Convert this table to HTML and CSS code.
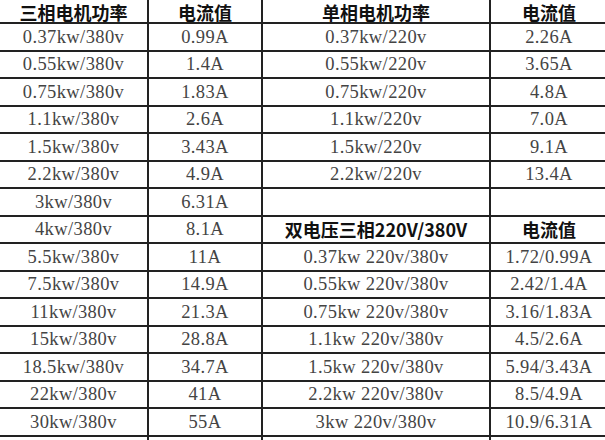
FILE: index.html
```html
<!DOCTYPE html>
<html lang="zh">
<head>
<meta charset="utf-8">
<link rel="stylesheet" href="styles.css">
</head>
<body>
<table class="sheet">
  <colgroup>
    <col class="c1"><col class="c2"><col class="c3"><col class="c4">
  </colgroup>
  <tr class="head"><td>三相电机功率</td><td>电流值</td><td>单相电机功率</td><td>电流值</td></tr>
  <tr><td>0.37kw/380v</td><td>0.99A</td><td>0.37kw/220v</td><td>2.26A</td></tr>
  <tr><td>0.55kw/380v</td><td>1.4A</td><td>0.55kw/220v</td><td>3.65A</td></tr>
  <tr><td>0.75kw/380v</td><td>1.83A</td><td>0.75kw/220v</td><td>4.8A</td></tr>
  <tr><td>1.1kw/380v</td><td>2.6A</td><td>1.1kw/220v</td><td>7.0A</td></tr>
  <tr><td>1.5kw/380v</td><td>3.43A</td><td>1.5kw/220v</td><td>9.1A</td></tr>
  <tr><td>2.2kw/380v</td><td>4.9A</td><td>2.2kw/220v</td><td>13.4A</td></tr>
  <tr><td>3kw/380v</td><td>6.31A</td><td></td><td></td></tr>
  <tr><td>4kw/380v</td><td>8.1A</td><td class="hd">双电压三相220V/380V</td><td class="hd">电流值</td></tr>
  <tr><td>5.5kw/380v</td><td>11A</td><td>0.37kw 220v/380v</td><td>1.72/0.99A</td></tr>
  <tr><td>7.5kw/380v</td><td>14.9A</td><td>0.55kw 220v/380v</td><td>2.42/1.4A</td></tr>
  <tr><td>11kw/380v</td><td>21.3A</td><td>0.75kw 220v/380v</td><td>3.16/1.83A</td></tr>
  <tr><td>15kw/380v</td><td>28.8A</td><td>1.1kw 220v/380v</td><td>4.5/2.6A</td></tr>
  <tr><td>18.5kw/380v</td><td>34.7A</td><td>1.5kw 220v/380v</td><td>5.94/3.43A</td></tr>
  <tr><td>22kw/380v</td><td>41A</td><td>2.2kw 220v/380v</td><td>8.5/4.9A</td></tr>
  <tr><td>30kw/380v</td><td>55A</td><td>3kw 220v/380v</td><td>10.9/6.31A</td></tr>
  <tr><td>37kw/380v</td><td>69A</td><td>4kw 220v/380v</td><td>14.1/8.1A</td></tr>
</table>
</body>
</html>
```
FILE: styles.css
```css
html, body {
  margin: 0;
  padding: 0;
  background: #ffffff;
  overflow: hidden;
}
.sheet {
  border-collapse: collapse;
  table-layout: fixed;
  width: 609px;
  margin: -5.5px 0 0 -2px;
  font-family: "Liberation Serif", "Noto Sans CJK SC", serif;
  font-size: 18.5px;
  letter-spacing: 0.4px;
  color: #444;
}
.c1 { width: 149px; }
.c2 { width: 114px; }
.c3 { width: 228px; }
.c4 { width: 118px; }
.sheet tr {
  height: 27.5px;
}
.sheet td {
  border: 2px solid #222;
  padding: 0;
  text-align: center;
  vertical-align: middle;
  white-space: nowrap;
  line-height: 20px;
}
.head td {
  padding-top: 6px;
  line-height: 18px;
}
.head td, .sheet td.hd {
  font-family: "Noto Sans CJK SC", "Liberation Sans", sans-serif;
  font-weight: 700;
  font-size: 18px;
  letter-spacing: 0;
  color: #111;
}
```
